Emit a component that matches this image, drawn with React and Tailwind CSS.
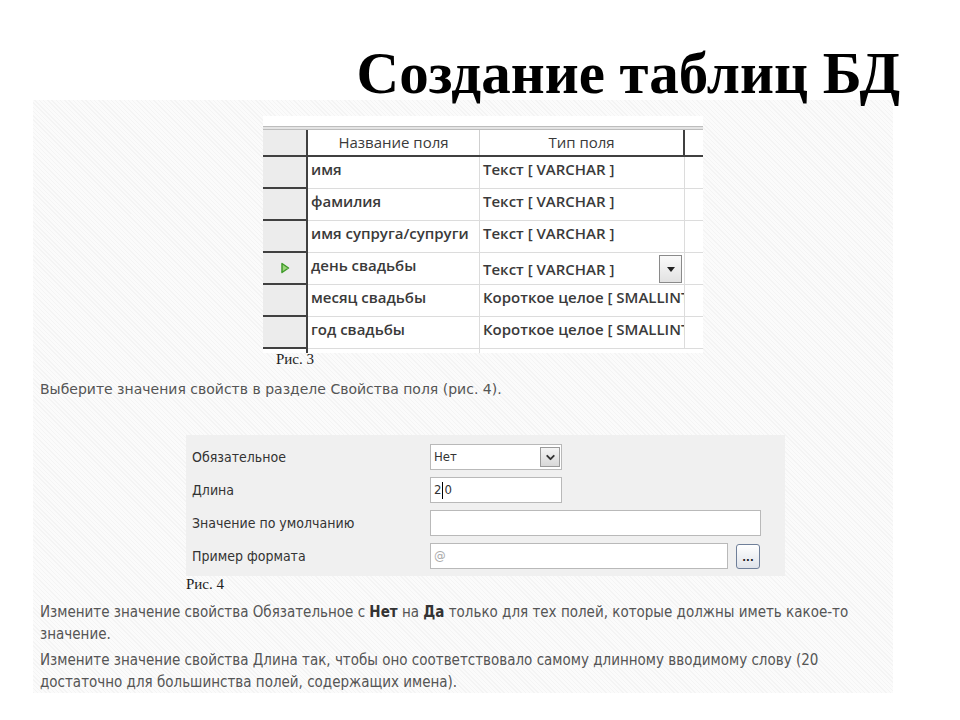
import { ChevronDown } from 'lucide-react'

const rows = [
  { name: 'имя', type: 'Текст [ VARCHAR ]' },
  { name: 'фамилия', type: 'Текст [ VARCHAR ]' },
  { name: 'имя супруга/супруги', type: 'Текст [ VARCHAR ]' },
  { name: 'день свадьбы', type: 'Текст [ VARCHAR ]', active: true },
  { name: 'месяц свадьбы', type: 'Короткое целое [ SMALLINT ]' },
  { name: 'год свадьбы', type: 'Короткое целое [ SMALLINT ]' },
]

const hatch = {
  backgroundImage:
    'repeating-linear-gradient(45deg, #f4f4f4 0px, #f4f4f4 1px, #fbfbfb 1px, #fbfbfb 3px)',
}

function FieldsTable() {
  return (
    <div className="w-[440px] bg-white pt-[10px] font-['Open_Sans',sans-serif] text-[15px] text-[#3a3a3a]">
      <div className="h-[4px] border-t border-b border-[#bdbdbd] bg-[#e4e4e4]" />
      <div className="flex h-[27px] border-b-2 border-[#404040]">
        <div className="w-[45px] bg-[#ececec] border-r-2 border-[#404040]" />
        <div className="w-[172px] border-r border-[#cfcfcf] flex items-center justify-center">Название поля</div>
        <div className="w-[205px] border-r-2 border-[#404040] flex items-center justify-center">Тип поля</div>
        <div className="flex-1" />
      </div>
      {rows.map((r) => (
        <div key={r.name} className="flex h-[32px] font-semibold">
          <div className="w-[45px] bg-[#ececec] border-r-2 border-b-2 border-[#404040] flex items-center justify-center">
            {r.active && (
              <svg width="10" height="12" viewBox="0 0 10 12">
                <path d="M2 1.5 L8.5 6 L2 10.5 Z" fill="#9bd37a" stroke="#3f9b2a" strokeWidth="1.5" strokeLinejoin="round" />
              </svg>
            )}
          </div>
          <div className="w-[172px] border-r border-b border-[#dcdcdc] px-[3px] pt-[1px] whitespace-nowrap overflow-hidden">{r.name}</div>
          <div className="w-[205px] border-r border-b border-[#dcdcdc] pl-[3px] whitespace-nowrap overflow-hidden flex items-start">
            <span className={r.active ? 'pt-[5px]' : 'pt-[1px]'}>{r.type}</span>
            {r.active && (
              <span className="ml-auto mr-[2px] mt-[2px] w-[23px] h-[28px] shrink-0 border border-[#8a8a8a] bg-gradient-to-b from-[#fafafa] to-[#e2e2e2] flex items-center justify-center">
                <svg width="8" height="5" viewBox="0 0 8 5"><path d="M0 0 H8 L4 5 Z" fill="#222" /></svg>
              </span>
            )}
          </div>
          <div className="flex-1 border-b border-[#dcdcdc]" />
        </div>
      ))}
      <div className="flex h-[4px]">
        <div className="w-[45px] border-r-2 border-[#404040]" />
        <div className="w-[172px] border-r border-[#dcdcdc]" />
      </div>
    </div>
  )
}

function Input({ className, children }) {
  return (
    <div className={`h-[26px] bg-white border border-[#b9b9b9] flex items-center px-[3px] text-[13px] ${className}`}>
      {children}
    </div>
  )
}

function PropsPanel() {
  return (
    <div className="w-[599px] bg-[#f0f0f0] pl-[6px] pt-[9px] pb-[7px] font-['DejaVu_Sans_Condensed','DejaVu_Sans',sans-serif] text-[14px] text-[#333]">
      <div className="grid grid-cols-[238px_1fr] gap-y-[7px] items-center">
        <div>Обязательное</div>
        <Input className="w-[132px] justify-between pr-[1px]">
          <span>Нет</span>
          <span className="w-[20px] h-[20px] border border-[#9a9a9a] bg-gradient-to-b from-[#f5f5f5] to-[#d8d8d8] flex items-center justify-center">
            <ChevronDown size={13} strokeWidth={3.5} color="#333" />
          </span>
        </Input>
        <div>Длина</div>
        <Input className="w-[132px]">
          <span>2</span>
          <span className="w-px h-[17px] bg-black mx-[1px]" />
          <span>0</span>
        </Input>
        <div>Значение по умолчанию</div>
        <Input className="w-[331px]" />
        <div>Пример формата</div>
        <div className="flex items-center gap-[8px]">
          <Input className="w-[298px] text-[#aaa]">@</Input>
          <div className="w-[24px] h-[25px] rounded-[3px] border border-[#6f7f99] bg-gradient-to-b from-white to-[#dfe3ea] flex items-end justify-center pb-[5px] text-[11px] font-bold leading-none text-[#222]">
            ...
          </div>
        </div>
      </div>
    </div>
  )
}

export default function App() {
  return (
    <div className="w-[960px] h-[720px] bg-white relative overflow-hidden">
      <h1 className="h-[100px] pt-[41px] pr-[60px] text-right font-['Liberation_Serif',serif] font-bold text-[59px] leading-[64px] text-black whitespace-nowrap">
        Создание таблиц БД
      </h1>
      <div className="mx-[33px] w-[860px] h-[593px] pt-[16px]" style={hatch}>
        <div className="ml-[230px]">
          <FieldsTable />
        </div>
        <div className="ml-[243px] -mt-[2px] font-['Liberation_Serif',serif] text-[15px] leading-[16px] text-[#222]">Рис. 3</div>
        <div className="ml-[7px] mt-[12px] font-['DejaVu_Sans',sans-serif] text-[14px] text-[#555]">
          Выберите значения свойств в разделе Свойства поля (рис. 4).
        </div>
        <div className="ml-[153px] mt-[35px]">
          <PropsPanel />
        </div>
        <div className="ml-[153px] font-['Liberation_Serif',serif] text-[15px] leading-[16px] text-[#222]">Рис. 4</div>
        <div className="ml-[7px] mt-[9px] font-['DejaVu_Sans_Condensed','DejaVu_Sans',sans-serif] text-[15px] leading-[22px] text-[#555] w-[853px]">
          <p>
            Измените значение свойства Обязательное с <b className="text-[#333]">Нет</b> на <b className="text-[#333]">Да</b> только для тех полей, которые должны иметь какое-то значение.
          </p>
          <p className="mt-[4px]">
            Измените значение свойства Длина так, чтобы оно соответствовало самому длинному вводимому слову (20 достаточно для большинства полей, содержащих имена).
          </p>
        </div>
      </div>
    </div>
  )
}
